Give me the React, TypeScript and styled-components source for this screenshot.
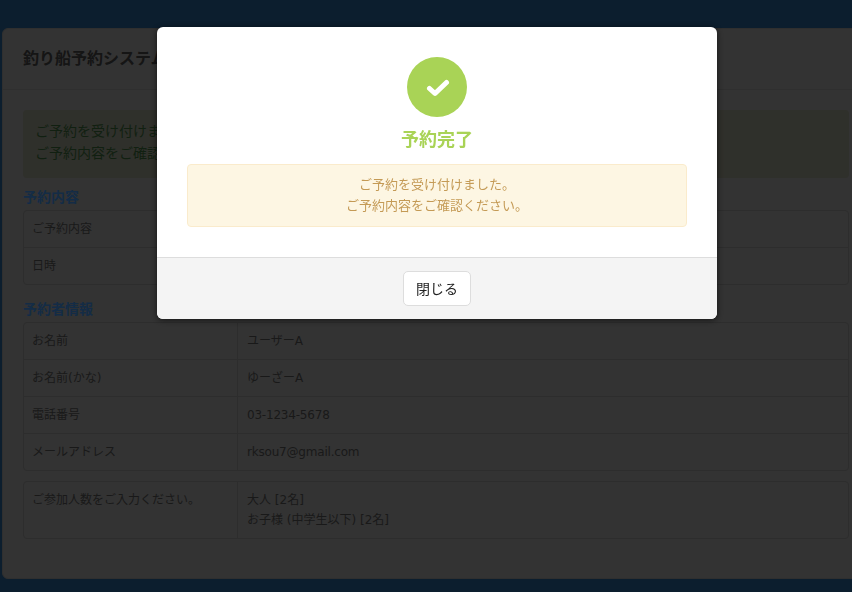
import React from 'react';
import styled, { createGlobalStyle } from 'styled-components';

const Global = createGlobalStyle`
  html, body { margin: 0; padding: 0; height: 592px; overflow: hidden; }
  body {
    background: #183c5c;
    color: #333;
    font-family: "DejaVu Sans", "Noto Sans CJK JP", sans-serif;
    font-size: 12px;
    line-height: 20px;
  }
  * { box-sizing: border-box; }
`;

const Page = styled.div`
  width: 852px;
  height: 592px;
  padding: 28px 0 0 2px;
  overflow: hidden;
`;

const Panel = styled.section`
  width: 870px;
  height: 551px;
  background: #666;
  border: 1px solid #5e5e5e;
  border-radius: 6px;
`;

const PanelHeader = styled.header`
  height: 61px;
  padding: 0 20px;
  display: flex;
  align-items: center;
  border-bottom: 1px solid #5e5e5e;
`;

const PanelTitle = styled.h1`
  margin: 0;
  font-size: 16px;
  font-weight: 700;
  color: #2a2a2a;
`;

const PanelBody = styled.div`
  padding: 20px;
`;

const SuccessAlert = styled.div`
  width: 826px;
  height: 68px;
  padding: 10px 12px;
  background: #5f6056;
  border-radius: 4px;
  color: #234023;
  font-size: 14px;
  line-height: 22px;
`;

const SectionHeading = styled.h2<{ $top: number }>`
  margin: ${p => p.$top}px 0 3px;
  font-size: 14px;
  line-height: 20px;
  font-weight: 700;
  color: #28588c;
`;

const InfoTable = styled.div<{ $top?: number }>`
  width: 826px;
  margin-top: ${p => p.$top ?? 0}px;
  border: 1px solid #5a5a5a;
  border-radius: 4px;
  background: #666;
`;

const InfoRow = styled.div`
  display: grid;
  grid-template-columns: 214px 1fr;
  & + & { border-top: 1px solid #5a5a5a; }
`;

const InfoLabel = styled.div`
  padding: 8px;
  min-height: 36px;
  border-right: 1px solid #5a5a5a;
`;

const InfoValue = styled.div<{ $tight?: boolean }>`
  padding: 8px 9px;
  letter-spacing: ${p => (p.$tight ? '-0.2px' : 'normal')};
`;

const Backdrop = styled.div`
  position: fixed;
  inset: 0;
  background: rgba(0, 0, 0, 0.5);
`;

const Modal = styled.div`
  position: absolute;
  left: 157px;
  top: 27px;
  width: 560px;
  height: 292px;
  background: #fff;
  border-radius: 6px;
  box-shadow: 0 1px 6px rgba(0, 0, 0, 0.6);
  overflow: hidden;
  display: flex;
  flex-direction: column;
`;

const ModalBody = styled.div`
  flex: 1;
  padding: 30px 30px 0;
  display: flex;
  flex-direction: column;
  align-items: center;
`;

const IconCircle = styled.div`
  width: 60px;
  height: 60px;
  border-radius: 50%;
  background: #a9d356;
  display: flex;
  align-items: center;
  justify-content: center;
`;

const CheckMark = styled.svg`
  width: 24px;
  height: 20px;
  margin: 2px 0 0 1px;
`;

const ModalTitle = styled.h3`
  margin: 10px 0 0;
  font-size: 18px;
  line-height: 26px;
  font-weight: 700;
  color: #a9d356;
`;

const WarnAlert = styled.div`
  margin-top: 11px;
  width: 500px;
  height: 63px;
  padding: 9px 12px;
  background: #fdf6e3;
  border: 1px solid #faebcc;
  border-radius: 4px;
  color: #c49a55;
  font-size: 13px;
  line-height: 21px;
  text-align: center;
`;

const ModalFooter = styled.footer`
  height: 62px;
  background: #f4f4f4;
  border-top: 1px solid #ddd;
  display: flex;
  align-items: center;
  justify-content: center;
`;

const CloseButton = styled.button`
  width: 68px;
  height: 35px;
  background: #fff;
  border: 1px solid #ddd;
  border-radius: 5px;
  color: #222;
  font: inherit;
  font-size: 14px;
  padding: 0;
`;

const rows1 = [['ご予約内容', ''], ['日時', '']];
const rows2 = [
  ['お名前', 'ユーザーA', false],
  ['お名前(かな)', 'ゆーざーA', false],
  ['電話番号', '03-1234-5678', true],
  ['メールアドレス', 'rksou7@gmail.com', true],
] as const;

export default function App() {
  return (
    <>
      <Global />
      <Page>
        <Panel>
          <PanelHeader>
            <PanelTitle>釣り船予約システム</PanelTitle>
          </PanelHeader>
          <PanelBody>
            <SuccessAlert>
              ご予約を受け付けました。<br />ご予約内容をご確認ください。
            </SuccessAlert>
            <SectionHeading $top={9}>予約内容</SectionHeading>
            <InfoTable>
              {rows1.map(([l, v]) => (
                <InfoRow key={l}><InfoLabel>{l}</InfoLabel><InfoValue>{v}</InfoValue></InfoRow>
              ))}
            </InfoTable>
            <SectionHeading $top={14}>予約者情報</SectionHeading>
            <InfoTable>
              {rows2.map(([l, v, tight]) => (
                <InfoRow key={l}><InfoLabel>{l}</InfoLabel><InfoValue $tight={tight}>{v}</InfoValue></InfoRow>
              ))}
            </InfoTable>
            <InfoTable $top={10}>
              <InfoRow>
                <InfoLabel>ご参加人数をご入力ください。</InfoLabel>
                <InfoValue>大人 [2名]<br />お子様 (中学生以下) [2名]</InfoValue>
              </InfoRow>
            </InfoTable>
          </PanelBody>
        </Panel>
      </Page>
      <Backdrop>
        <Modal>
          <ModalBody>
            <IconCircle>
              <CheckMark viewBox="0 0 24 20" fill="none" stroke="#fff" strokeWidth="5" strokeLinecap="round" strokeLinejoin="round">
                <polyline points="3.5,10.5 9,15.5 20.5,4.5" />
              </CheckMark>
            </IconCircle>
            <ModalTitle>予約完了</ModalTitle>
            <WarnAlert>
              ご予約を受け付けました。<br />ご予約内容をご確認ください。
            </WarnAlert>
          </ModalBody>
          <ModalFooter>
            <CloseButton>閉じる</CloseButton>
          </ModalFooter>
        </Modal>
      </Backdrop>
    </>
  );
}
